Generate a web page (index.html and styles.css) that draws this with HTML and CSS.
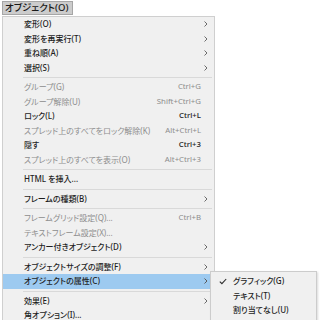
FILE: index.html
```html
<!DOCTYPE html>
<html lang="ja">
<head>
<meta charset="utf-8">
<link rel="stylesheet" href="styles.css">
</head>
<body>
<div class="bar"><span class="title">オブジェクト(O)</span></div>
<div class="stage">
  <div class="menu">
    <div class="item"><span class="label">変形(O)</span><span class="key"></span><span class="arrow"><svg width="4" height="6" viewBox="0 0 4 6"><path d="M0.5 0.5 L3 3 L0.5 5.5" fill="none" stroke="#6a6a6a" stroke-width="1"/></svg></span></div>
    <div class="item"><span class="label">変形を再実行(T)</span><span class="key"></span><span class="arrow"><svg width="4" height="6" viewBox="0 0 4 6"><path d="M0.5 0.5 L3 3 L0.5 5.5" fill="none" stroke="#6a6a6a" stroke-width="1"/></svg></span></div>
    <div class="item"><span class="label">重ね順(A)</span><span class="key"></span><span class="arrow"><svg width="4" height="6" viewBox="0 0 4 6"><path d="M0.5 0.5 L3 3 L0.5 5.5" fill="none" stroke="#6a6a6a" stroke-width="1"/></svg></span></div>
    <div class="item"><span class="label">選択(S)</span><span class="key"></span><span class="arrow"><svg width="4" height="6" viewBox="0 0 4 6"><path d="M0.5 0.5 L3 3 L0.5 5.5" fill="none" stroke="#6a6a6a" stroke-width="1"/></svg></span></div>
    <div class="sep"></div>
    <div class="item off"><span class="label">グループ(G)</span><span class="key">Ctrl+G</span><span class="arrow"></span></div>
    <div class="item off"><span class="label">グループ解除(U)</span><span class="key">Shift+Ctrl+G</span><span class="arrow"></span></div>
    <div class="item"><span class="label">ロック(L)</span><span class="key">Ctrl+L</span><span class="arrow"></span></div>
    <div class="item off"><span class="label">スプレッド上のすべてをロック解除(K)</span><span class="key">Alt+Ctrl+L</span><span class="arrow"></span></div>
    <div class="item"><span class="label">隠す</span><span class="key">Ctrl+3</span><span class="arrow"></span></div>
    <div class="item off"><span class="label">スプレッド上のすべてを表示(O)</span><span class="key">Alt+Ctrl+3</span><span class="arrow"></span></div>
    <div class="sep"></div>
    <div class="item"><span class="label">HTML を挿入...</span><span class="key"></span><span class="arrow"></span></div>
    <div class="sep"></div>
    <div class="item"><span class="label">フレームの種類(B)</span><span class="key"></span><span class="arrow"><svg width="4" height="6" viewBox="0 0 4 6"><path d="M0.5 0.5 L3 3 L0.5 5.5" fill="none" stroke="#6a6a6a" stroke-width="1"/></svg></span></div>
    <div class="sep"></div>
    <div class="item off"><span class="label">フレームグリッド設定(Q)...</span><span class="key">Ctrl+B</span><span class="arrow"></span></div>
    <div class="item off"><span class="label">テキストフレーム設定(X)...</span><span class="key"></span><span class="arrow"></span></div>
    <div class="item"><span class="label">アンカー付きオブジェクト(D)</span><span class="key"></span><span class="arrow"><svg width="4" height="6" viewBox="0 0 4 6"><path d="M0.5 0.5 L3 3 L0.5 5.5" fill="none" stroke="#6a6a6a" stroke-width="1"/></svg></span></div>
    <div class="sep"></div>
    <div class="item"><span class="label">オブジェクトサイズの調整(F)</span><span class="key"></span><span class="arrow"><svg width="4" height="6" viewBox="0 0 4 6"><path d="M0.5 0.5 L3 3 L0.5 5.5" fill="none" stroke="#6a6a6a" stroke-width="1"/></svg></span></div>
    <div class="item hot"><span class="label">オブジェクトの属性(C)</span><span class="key"></span><span class="arrow"><svg width="4" height="6" viewBox="0 0 4 6"><path d="M0.5 0.5 L3 3 L0.5 5.5" fill="none" stroke="#5a5a5a" stroke-width="1"/></svg></span></div>
    <div class="sep"></div>
    <div class="item"><span class="label">効果(E)</span><span class="key"></span><span class="arrow"><svg width="4" height="6" viewBox="0 0 4 6"><path d="M0.5 0.5 L3 3 L0.5 5.5" fill="none" stroke="#6a6a6a" stroke-width="1"/></svg></span></div>
    <div class="item"><span class="label">角オプション(I)...</span><span class="key"></span><span class="arrow"></span></div>
  </div>
  <div class="submenu">
    <div class="subitem"><span class="check"><svg width="8" height="7" viewBox="0 0 8 7"><path d="M0.8 3.6 L2.9 5.7 L7.2 1" fill="none" stroke="#2b2b2b" stroke-width="1.1"/></svg></span><span class="label">グラフィック(G)</span></div>
    <div class="subitem"><span class="check"></span><span class="label">テキスト(T)</span></div>
    <div class="subitem"><span class="check"></span><span class="label">割り当てなし(U)</span></div>
  </div>
</div>
</body>
</html>
```

FILE: styles.css
```css
html, body {
  margin: 0;
  padding: 0;
  background: #ffffff;
}
body {
  width: 320px;
  height: 320px;
  overflow: hidden;
  font-family: "Noto Sans", "Noto Sans CJK JP", sans-serif;
  font-feature-settings: "palt";
  color: #1e1e1e;
}
.bar {
  display: flex;
  padding: 1px 0 0 2px;
  height: 15px;
}
.title {
  display: flex;
  align-items: center;
  box-sizing: border-box;
  width: 71px;
  height: 14px;
  padding-left: 2px;
  background: #cccccc;
  border: 1px solid #a6a6a6;
  font-size: 9.5px;
  font-weight: 500;
  color: #1a1a1a;
  line-height: 1;
  white-space: nowrap;
  overflow: hidden;
}
.stage {
  position: relative;
  padding-left: 2px;
}
.menu {
  box-sizing: border-box;
  width: 213px;
  background: #f0f0f0;
  border: 1px solid #cfcfcf;
  padding: 0 0 4px 0;
}
.item {
  display: flex;
  align-items: center;
  height: 14.5px;
  font-size: 8px;
  font-weight: 500;
  line-height: 1;
  padding-left: 21px;
  white-space: nowrap;
}
.item .label {
  flex: 1;
}
.item .key {
  font-size: 7.8px;
}
.item .arrow {
  width: 13px;
  display: flex;
  align-items: center;
  padding-left: 3px;
  box-sizing: border-box;
}
.item .arrow svg {
  display: block;
}
.item.off {
  color: #8d8d8d;
  font-weight: 400;
}
.item.hot {
  background: #9dcaf0;
}
.sep {
  height: 1px;
  background: #d9d9d9;
  margin: 2px 2px 2px 20px;
}
.submenu {
  position: absolute;
  left: 210px;
  top: 255px;
  box-sizing: border-box;
  width: 107px;
  background: #f0f0f0;
  border: 1px solid #cccccc;
  box-shadow: 1px 1px 2px rgba(0, 0, 0, 0.15);
  padding: 2px 0 2px 0;
}
.subitem {
  display: flex;
  align-items: center;
  height: 14.5px;
  font-size: 8px;
  font-weight: 500;
  line-height: 1;
  white-space: nowrap;
}
.subitem .check {
  width: 22px;
  display: flex;
  justify-content: center;
  align-items: center;
  padding-left: 2px;
  box-sizing: border-box;
}
.subitem .check svg {
  display: block;
}
```
